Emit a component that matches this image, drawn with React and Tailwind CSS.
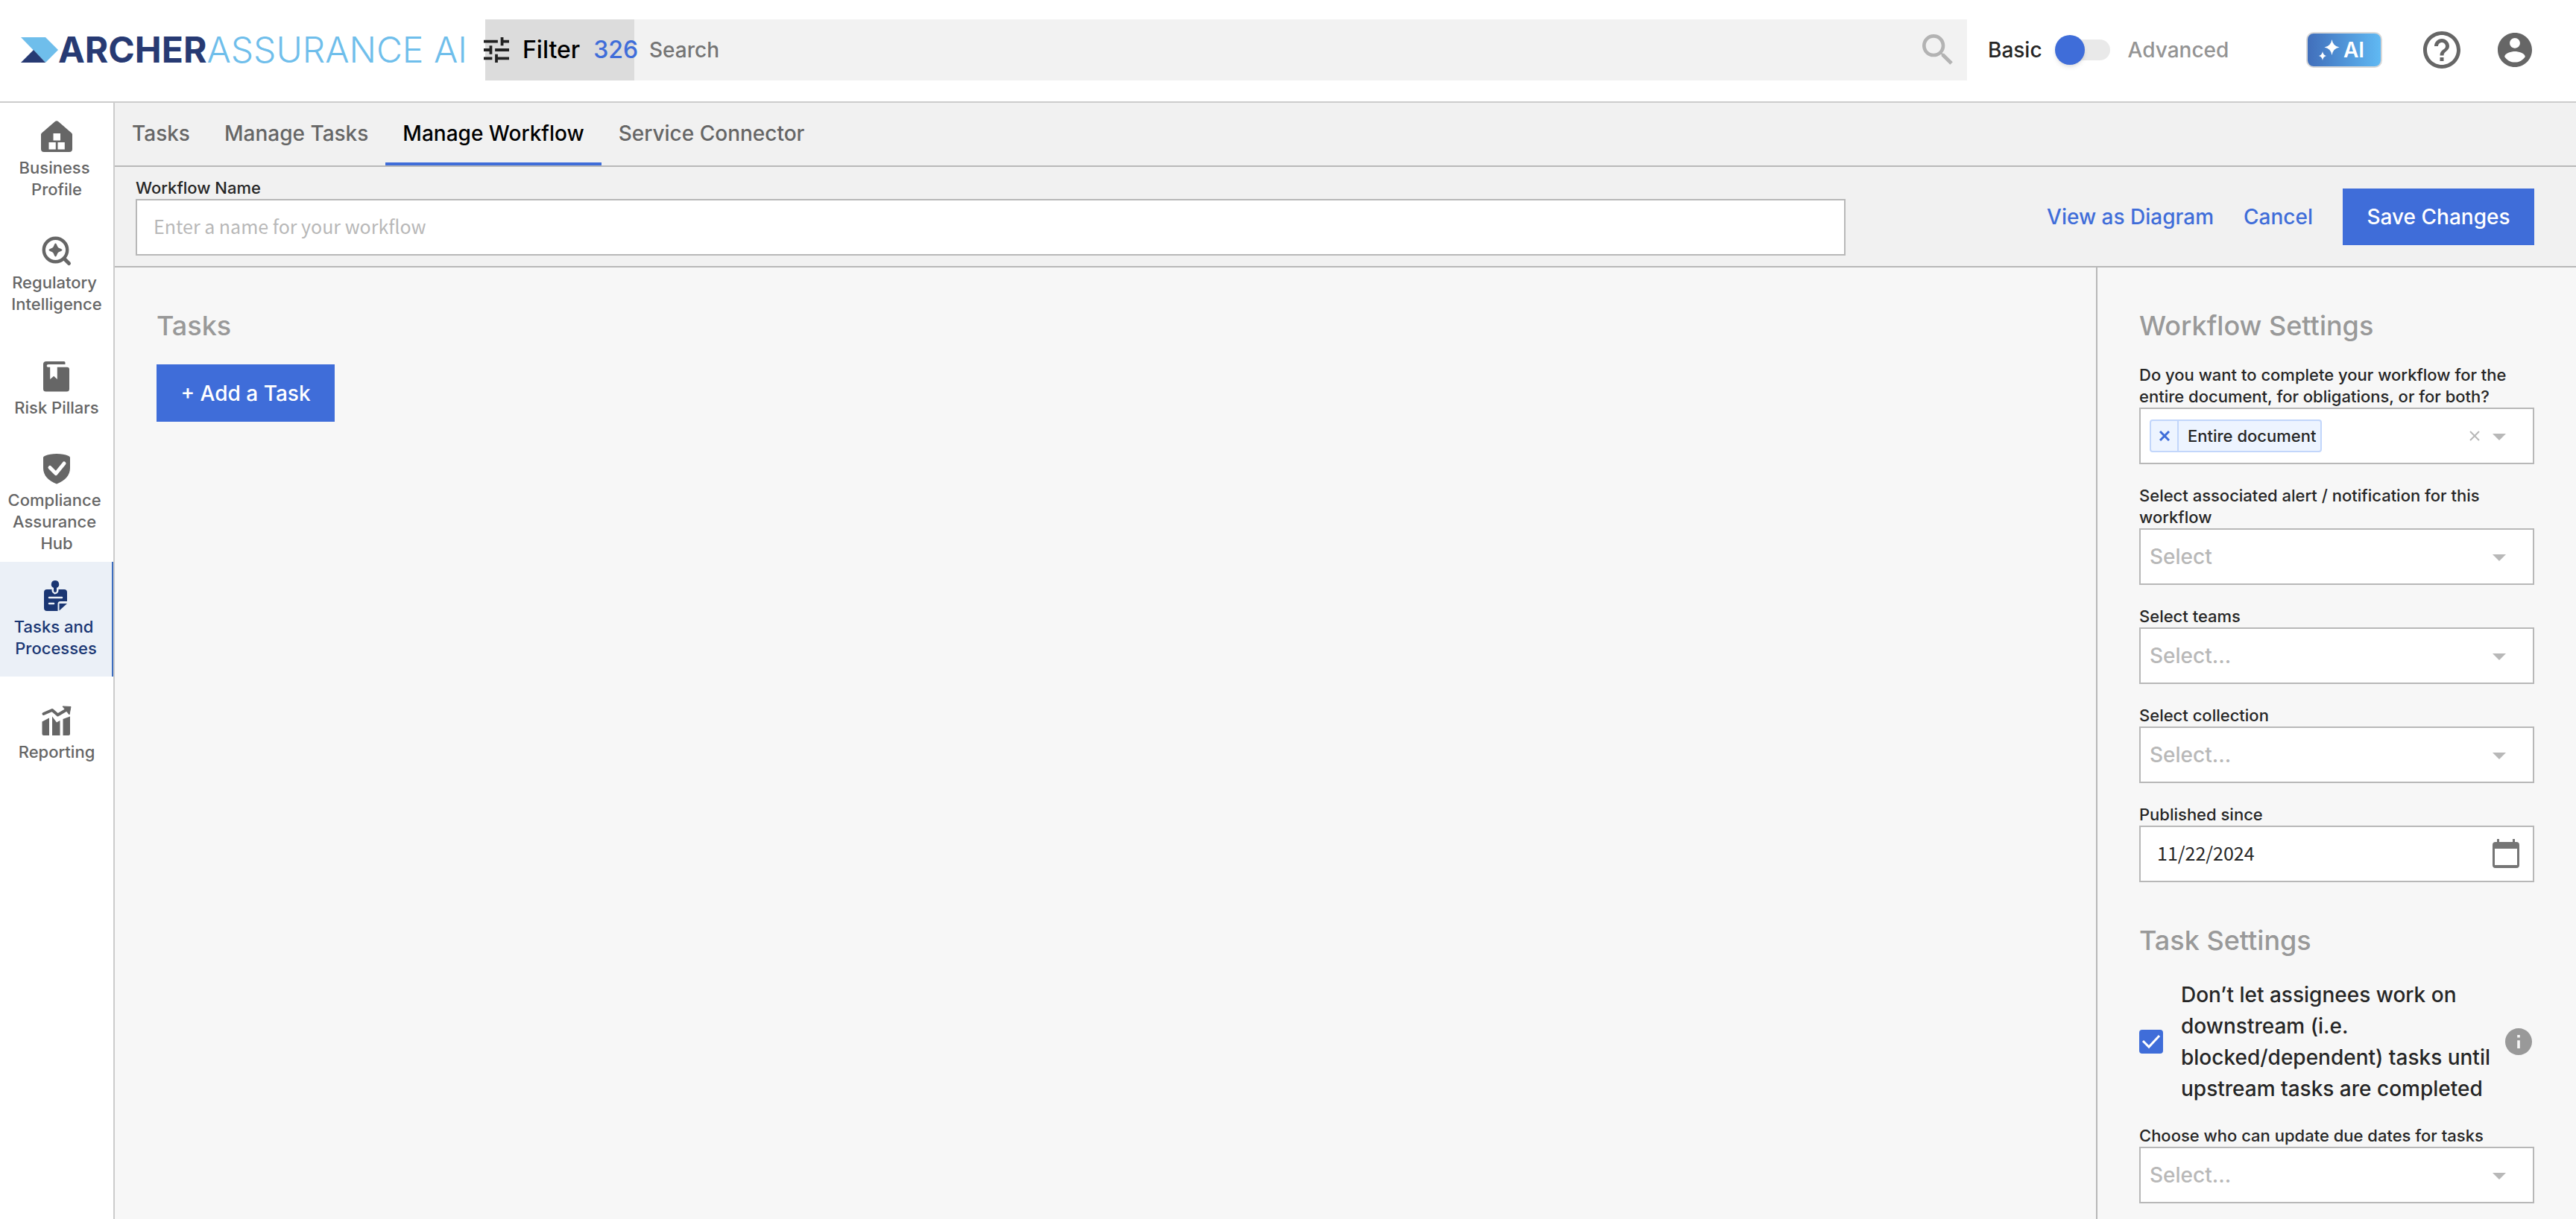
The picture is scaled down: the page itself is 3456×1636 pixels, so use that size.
import { useState } from "react";
import classNames from "clsx";

// the trailing spaces count in the centering of wrapped labels
const navItems = [
  { label: ["Business ", "Profile"], icon: HomeIcon, className: "pt-6" },
  { label: ["Regulatory ", "Intelligence"], icon: RegulatoryIcon, className: "pt-6" },
  { label: ["Risk Pillars"], icon: BookIcon, className: "pt-[38px]" },
  { label: ["Compliance ", "Assurance ", "Hub"], icon: ShieldIcon, className: "pt-2" },
  { label: ["Tasks and ", "Processes"], icon: TasksIcon, className: "pt-6", active: true },
  { label: ["Reporting"], icon: ReportIcon, className: "pt-[38px]" },
];

const tabs = ["Tasks", "Manage Tasks", "Manage Workflow", "Service Connector"];

function HomeIcon() {
  return (
    <svg viewBox="0 0 42 42" className="size-[42px]" fill="currentColor">
      <path
        fillRule="evenodd"
        d="M18.6 1.2a3.6 3.6 0 0 1 4.8 0L41 16.6c.7.6 1 1.2 1 2V38a4 4 0 0 1-4 4H4a4 4 0 0 1-4-4V18.6c0-.8.3-1.4 1-2ZM16.5 17v9.5H26V17ZM10.500 29v9.500h9.300V29Zm12 0v9.500h9.300V29Z"
      />
    </svg>
  );
}

function RegulatoryIcon() {
  return (
    <svg viewBox="0 0 42 42" className="size-[42px]" fill="none" stroke="currentColor">
      <circle cx="19.5" cy="19.5" r="15.7" strokeWidth="4.4" />
      <path d="m31.5 31.5 6 6" strokeWidth="5" strokeLinecap="round" />
      <path
        d="M19.5 10.500c.8 0 1.200.9 2.500 4 .6 1.300 1.200 1.900 2.500 2.500 3.100 1.300 4 1.700 4 2.500s-.9 1.200-4 2.500c-1.300.6-1.900 1.200-2.500 2.500-1.300 3.100-1.700 4-2.500 4s-1.200-.9-2.500-4c-.6-1.300-1.200-1.900-2.500-2.500-3.100-1.300-4-1.700-4-2.500s.9-1.200 4-2.500c1.300-.6 1.900-1.200 2.500-2.500 1.300-3.100 1.700-4 2.500-4Z"
        fill="currentColor"
        stroke="none"
      />
    </svg>
  );
}

function BookIcon() {
  return (
    <svg viewBox="0 0 42 42" className="size-[42px]" fill="currentColor">
      <path d="M7 1h24a1.5 1.5 0 0 1 1.5 1.5V5H10c-2.800 0-3 3.500-.5 3.800h2.700V25l5-4.300 4.600 4.300V8.800H35a3 3 0 0 1 3 3V38a3.500 3.500 0 0 1-3.500 3.500h-28A3.500 3.500 0 0 1 3 38V5a4 4 0 0 1 4-4Z" />
    </svg>
  );
}

function ShieldIcon() {
  return (
    <svg viewBox="0 0 42 42" className="size-[42px]">
      <path
        d="M21 1c6 0 11.5 1 15.5 2.700C38 4.300 39 5 39 6.500V20c0 10-7 17.500-18 21.500C10 37.500 3 30 3 20V6.500c0-1.500 1-2.200 2.500-2.800C9.500 2 15 1 21 1Z"
        fill="currentColor"
      />
      <path d="m12 19.500 8 8L31 14" fill="none" stroke="#fff" strokeWidth="5" strokeLinecap="round" strokeLinejoin="round" />
    </svg>
  );
}

function TasksIcon() {
  return (
    <svg viewBox="0 0 42 42" className="size-[42px]" fill="currentColor">
      <path d="M9 13h6.500v1.500c0 2 1 3 2.500 3.800V19c2.500 1.500 6.500-1 6.500-4.500V13H32a4 4 0 0 1 4 4v12H27a3.500 3.500 0 0 0-3.500 3.500V42H9a4 4 0 0 1-4-4V17a4 4 0 0 1 4-4Z" />
      <path d="M20 1a5.200 5.200 0 0 1 2 10v4a2 2 0 0 1-4 0v-4a5.200 5.200 0 0 1 2-10Z" />
      <path d="M25.500 32H36l-10.500 9.500Z" />
      <path d="M12 24h17M12 32h6" stroke="#ebf0f7" strokeWidth="2.500" strokeLinecap="round" />
    </svg>
  );
}

function ReportIcon() {
  return (
    <svg viewBox="0 0 42 42" className="size-[42px]" fill="currentColor">
      <path d="M3.500 12 15 7l7.500 6.500L36 5.500" fill="none" stroke="currentColor" strokeWidth="4" strokeLinejoin="round" strokeLinecap="round" />
      <path d="m29 2 11 .5-2 10.500Z" stroke="currentColor" strokeLinejoin="round" />
      <path d="m1.500 22.500 9.500-5V41H3.500a2 2 0 0 1-2-2ZM15 15.500l6 8 4.500-2.500V41H15ZM29.500 19l9.500-3.500V39a2 2 0 0 1-2 2h-7.500Z" />
    </svg>
  );
}

function Logo() {
  return (
    <a href="#" aria-label="Archer Assurance AI" className="flex w-[651px] shrink-0 items-center pl-7">
      <svg viewBox="0 0 50 34" className="h-[34px] w-[50px] shrink-0">
        <path d="M0 0h33l17 17-17 17Z" fill="#6fbeeb" />
        <path d="M17 17 33 34H0Z" fill="#273a73" />
      </svg>
      <span className="text-[48px] leading-[50px] font-bold whitespace-nowrap text-[#273a73]">
        ARCHER<span className="font-light text-[#6fbeeb]">ASSURANCE AI</span>
      </span>
    </a>
  );
}

function Caret() {
  return (
    <svg viewBox="0 0 18 9" className="pointer-events-none absolute top-[35px] right-[38px] h-[9px] w-[18px]" fill="#b8b8b8">
      <path d="M0 0h18L9 9Z" />
    </svg>
  );
}

function Field({ id, label, children }) {
  return (
    <div className="flex flex-col">
      <label htmlFor={id} className="text-[22px] leading-[29px] font-medium text-[#262626]">
        {label}
      </label>
      {children}
    </div>
  );
}

function SelectField({ id, label, placeholder }) {
  return (
    <Field id={id} label={label}>
      <div className="relative">
        <select
          id={id}
          className="block h-[76px] w-full appearance-none border-2 border-[#b8b8b8] bg-white px-3 text-[28px] font-medium text-[#b8b8b8]"
        >
          <option>{placeholder}</option>
        </select>
        <Caret />
      </div>
    </Field>
  );
}

function Header() {
  return (
    <header className="flex h-[138px] shrink-0 items-center border-b-2 border-[#ccc] bg-white pb-0.5">
      <Logo />
      <button className="relative z-10 flex h-[82px] w-[200px] shrink-0 items-center bg-[#dcdcdc] text-[32px] font-medium whitespace-nowrap">
        <svg viewBox="3 3 18 18" className="-ml-[2px] size-[34px] shrink-0" fill="#222">
          <path d="M3 17v2h6v-2zM3 5v2h10V5zm10 16v-2h8v-2h-8v-2h-2v6zM7 9v2H3v2h4v2h2V9zm14 4v-2H11v2zm-6-4h2V7h4V5h-4V3h-2z" />
        </svg>
        <span className="ml-[18px]">Filter</span>
        <span className="ml-[18px] text-[#3f6dd9]">326</span>
      </button>
      <div className="relative flex-1">
        <input
          type="text"
          aria-label="Search"
          placeholder="Search"
          className="block h-[82px] w-full bg-[#f2f2f2] pr-20 pl-5 text-[28px] font-medium placeholder:text-[#757575]"
        />
        <svg viewBox="3 3 18 18" className="absolute top-5 right-[18px] size-[42px]" fill="#b3b3b3">
          <path d="M15.5 14h-.79l-.28-.27A6.470 6.470 0 0 0 16 9.500 6.500 6.500 0 1 0 9.500 16c1.610 0 3.090-.59 4.230-1.570l.27.28v.79l5 4.990L20.490 19zm-6 0C7.010 14 5 11.990 5 9.500S7.010 5 9.500 5 14 7.010 14 9.500 11.990 14 9.500 14" />
        </svg>
      </div>
      <label className="flex w-[455px] shrink-0 items-center pl-7 text-[28px] font-medium text-[#262626]">
        Basic
        <span className="relative mr-6 ml-[17px] h-10 w-[74px]">
          <input type="checkbox" role="switch" className="absolute inset-0 appearance-none" />
          <span className="absolute top-[6px] right-0 h-7 w-[60px] rounded-full bg-[#e9e9e9]" />
          <span className="absolute top-0 left-0 size-10 rounded-full bg-[#3f6dd9] shadow-md" />
        </span>
        <span className="text-[#949494]">Advanced</span>
      </label>
      <button className="flex h-12 w-[102px] shrink-0 items-center gap-[5px] rounded-[10px] border-2 border-[#d8d8d8] bg-linear-to-r from-[#416fbb] to-[#60b9f3] pl-[15px] text-[28px] font-semibold text-white">
        <svg viewBox="0 0 28 28" className="size-7 shrink-0" fill="#fff">
          <path d="M17.500 0q1.500 9 10 10.500-8.500 1.500-10 10.500-1.500-9-10-10.500 8.500-1.500 10-10.500ZM5 16q.8 5 5 6-4.200 1-5 6-.8-5-5-6 4.200-1 5-6Z" />
        </svg>
        AI
      </button>
      <div className="flex shrink-0 items-center gap-[50px] pr-[59px] pl-[55px] text-[#666]">
        <button aria-label="Help">
          <svg viewBox="2 2 20 20" className="size-[50px]" fill="currentColor">
            <path d="M11 18h2v-2h-2zm1-16C6.480 2 2 6.480 2 12s4.480 10 10 10 10-4.480 10-10S17.520 2 12 2m0 18c-4.410 0-8-3.590-8-8s3.590-8 8-8 8 3.590 8 8-3.590 8-8 8m0-14c-2.210 0-4 1.790-4 4h2c0-1.100.9-2 2-2s2 .9 2 2c0 2-3 1.750-3 5h2c0-2.250 3-2.500 3-5 0-2.210-1.790-4-4-4" />
          </svg>
        </button>
        <button aria-label="Account">
          <svg viewBox="2 2 20 20" className="size-[46px]" fill="currentColor">
            <path d="M12 2C6.480 2 2 6.480 2 12s4.480 10 10 10 10-4.480 10-10S17.520 2 12 2m0 3c1.660 0 3 1.340 3 3s-1.340 3-3 3-3-1.340-3-3 1.340-3 3-3m0 14.200c-2.500 0-4.710-1.280-6-3.220.03-1.990 4-3.080 6-3.080 1.990 0 5.970 1.090 6 3.080-1.290 1.940-3.500 3.220-6 3.220" />
          </svg>
        </button>
      </div>
    </header>
  );
}

function Sidebar() {
  return (
    <nav className="w-[154px] shrink-0 border-r-2 border-[#ccc] bg-white">
      {navItems.map(({ label, icon: Icon, className, active }) => (
        <a
          key={label[0]}
          href="#"
          className={classNames(
            "flex h-[154px] flex-col items-center gap-[7px] text-center text-[22px] leading-[29px] font-medium",
            className,
            active ? "border-r-2 border-[#3d6ebf] bg-[#ebf0f7] text-[#1a3673]" : "text-[#666]"
          )}
        >
          <Icon />
          <span className="whitespace-pre">
            {label.map((line) => (
              <span key={line} className="block">
                {line}
              </span>
            ))}
          </span>
        </a>
      ))}
    </nav>
  );
}

function WorkflowSettings() {
  const [blocked, setBlocked] = useState(true);

  return (
    <aside className="w-[644px] shrink-0 border-l-2 border-[#b8b8b8] px-14 pt-14">
      <h2 className="text-[36px] leading-[44px] font-medium text-[#999]">Workflow Settings</h2>
      <div className="mt-[30px] flex flex-col gap-7">
        <Field
          id="scope"
          label="Do you want to complete your workflow for the entire document, for obligations, or for both?"
        >
          <div className="relative">
            <div className="flex h-[76px] items-center border-2 border-[#b8b8b8] bg-white pl-3">
              <div className="flex h-11 items-center rounded-sm border-2 border-[#c2d6fb] bg-[#edf4ff] text-[22px] font-medium text-[#262626]">
                <button
                  aria-label="Remove Entire document"
                  className="flex h-full w-[37px] items-center justify-center border-r-2 border-[#c2d6fb]"
                >
                  <svg viewBox="0 0 14 14" className="size-[14px]" fill="none" stroke="#3f6dd9" strokeWidth="3">
                    <path d="m1 1 12 12M13 1 1 13" />
                  </svg>
                </button>
                <span className="pr-[6px] pl-3">Entire document</span>
              </div>
              <input id="scope" type="text" className="h-full min-w-0 flex-1" />
              <button aria-label="Clear all" className="mr-[71px]">
                <svg viewBox="0 0 14 14" className="size-[14px]" fill="none" stroke="#b8b8b8" strokeWidth="2">
                  <path d="m1 1 12 12M13 1 1 13" />
                </svg>
              </button>
            </div>
            <Caret />
          </div>
        </Field>
        <SelectField id="alert" label="Select associated alert / notification for this workflow" placeholder="Select" />
        <SelectField id="teams" label="Select teams" placeholder="Select..." />
        <SelectField id="collection" label="Select collection" placeholder="Select..." />
        <Field id="published" label="Published since">
          <div className="relative">
            <input
              id="published"
              type="text"
              defaultValue="11/22/2024"
              className="block h-[76px] w-full border-2 border-[#b8b8b8] bg-white pb-1 pl-[22px] font-['Noto_Sans_CJK_SC',sans-serif] text-[25px] text-[#262626]"
            />
            <svg viewBox="0 0 36 40" className="absolute top-[18px] right-5 h-10 w-9" fill="#757575">
              <path
                fillRule="evenodd"
                d="M6 0h3v4h18V0h3v4h2a4 4 0 0 1 4 4v27a4 4 0 0 1-4 4H4a4 4 0 0 1-4-4V8a4 4 0 0 1 4-4h2ZM3 13v22h30V13Z"
              />
            </svg>
          </div>
        </Field>
      </div>

      <h2 className="mt-14 text-[36px] leading-[44px] font-medium text-[#999]">Task Settings</h2>
      <div className="mt-[30px] flex items-center">
        <span className="relative size-8 shrink-0">
          <input
            id="blocked"
            type="checkbox"
            checked={blocked}
            onChange={(e) => setBlocked(e.target.checked)}
            className="block size-8 appearance-none rounded-sm border-2 border-[#3f6dd9] checked:bg-[#3f6dd9]"
          />
          <svg viewBox="0 0 32 32" className="pointer-events-none absolute inset-0" fill="none" stroke="#fff" strokeWidth="3">
            <path d="m5 15 8 8L27 8" />
          </svg>
        </span>
        <label htmlFor="blocked" className="ml-6 flex-1 text-[28px] leading-[42px] font-medium text-[#262626]">
          Don’t let assignees work on downstream (i.e. blocked/dependent) tasks until upstream tasks are completed
        </label>
        <button aria-label="More information" className="mr-[3px]">
          <svg viewBox="2 2 20 20" className="size-9" fill="#999">
            <path d="M12 2C6.480 2 2 6.480 2 12s4.480 10 10 10 10-4.480 10-10S17.520 2 12 2m1 15h-2v-6h2zm0-8h-2V7h2z" />
          </svg>
        </button>
      </div>
      <div className="mt-7">
        <SelectField id="due-dates" label="Choose who can update due dates for tasks" placeholder="Select..." />
      </div>
    </aside>
  );
}

export default function App() {
  const [activeTab, setActiveTab] = useState("Manage Workflow");

  return (
    <div className="flex h-screen flex-col overflow-hidden bg-[#f7f7f7] font-[Inter,sans-serif] text-black">
      <Header />
      <div className="flex min-h-0 flex-1">
        <Sidebar />
        <div className="flex min-w-0 flex-1 flex-col">
          <div className="flex h-[86px] shrink-0 border-b-2 border-[#b8b8b8] bg-[#f1f1f1]">
            {tabs.map((tab) => (
              <button
                key={tab}
                onClick={() => setActiveTab(tab)}
                className={classNames(
                  "border-b-4 px-[23px] pt-0.5 text-[28px] font-medium",
                  tab === activeTab ? "border-b-[#3f6dd9] text-black" : "border-b-transparent text-[#666]"
                )}
              >
                {tab}
              </button>
            ))}
          </div>
          <div className="flex h-[135px] shrink-0 border-b-2 border-[#b8b8b8] bg-[#f1f1f1] pr-14 pl-7">
            <div className="flex max-w-[2294px] flex-1 flex-col pt-[14px]">
              <label htmlFor="workflow-name" className="text-[22px] leading-[29px] font-medium text-[#262626]">
                Workflow Name
              </label>
              <input
                id="workflow-name"
                type="text"
                placeholder="Enter a name for your workflow"
                className="h-[76px] border-2 border-[#b8b8b8] bg-white pb-1 pl-[22px] font-['Noto_Sans_CJK_SC',sans-serif] text-[25px] placeholder:text-[#b8b8b8]"
              />
            </div>
            <div className="ml-auto flex items-center gap-10 text-[28px] font-medium text-[#3f6dd9]">
              <button>View as Diagram</button>
              <button>Cancel</button>
              <button className="h-[76px] w-[257px] bg-[#3f6dd9] text-white">Save Changes</button>
            </div>
          </div>
          <div className="flex min-h-0 flex-1">
            <main className="flex-1 px-14 pt-14">
              <h2 className="text-[36px] leading-[44px] font-medium text-[#999]">Tasks</h2>
              <button className="mt-[30px] h-[77px] w-[239px] bg-[#3f6dd9] text-[28px] font-medium text-white">
                + Add a Task
              </button>
            </main>
            <WorkflowSettings />
          </div>
        </div>
      </div>
    </div>
  );
}
